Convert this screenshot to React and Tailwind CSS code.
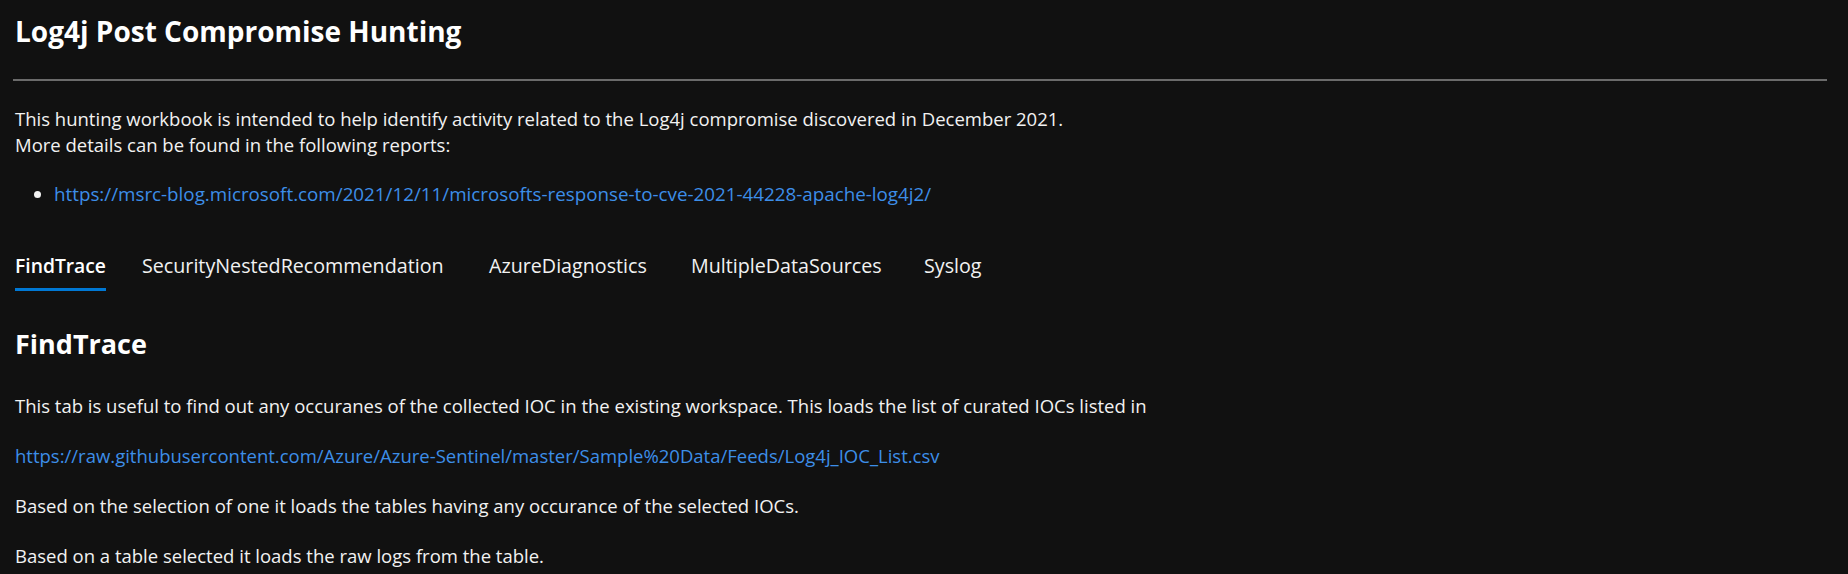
export default function App() {
  const font = { fontFamily: '"Open Sans", "Noto Sans", Arial, sans-serif' };
  const tabs = [
    { label: 'FindTrace', w: 'w-[127px]', active: true },
    { label: 'SecurityNestedRecommendation', w: 'w-[347px]' },
    { label: 'AzureDiagnostics', w: 'w-[202px]' },
    { label: 'MultipleDataSources', w: 'w-[233px]' },
    { label: 'Syslog', w: '' },
  ];
  return (
    <div className="min-h-[574px] w-full bg-[#111111] pl-[15px] pr-[21px] pt-[13px] text-[#f2f2f2]" style={font}>
      <h1 className="text-[28px] font-bold leading-[36px] text-white">Log4j Post Compromise Hunting</h1>
      <div className="-ml-[2px] mt-[30px] h-[2px] bg-[#6b6b6b]" />
      <div className="mt-[25px] text-[18.5px] leading-[26px]">
        <p>This hunting workbook is intended to help identify activity related to the Log4j compromise discovered in December 2021.</p>
        <p>More details can be found in the following reports:</p>
        <ul className="mt-[23px] list-disc pl-[39px] marker:text-[#f2f2f2]">
          <li>
            <a className="text-[18.8px] text-[#3d8ee8]" href="#">https://msrc-blog.microsoft.com/2021/12/11/microsofts-response-to-cve-2021-44228-apache-log4j2/</a>
          </li>
        </ul>
      </div>
      <div className="mt-[46px] flex text-[19.7px] leading-[26px]">
        {tabs.map((t) => (
          <div key={t.label} className={`flex ${t.w}`}>
            <div className="flex flex-col">
              <span className={t.active ? 'font-semibold text-[19.3px] text-white' : 'text-[#f2f2f2]'}>{t.label}</span>
              <div className={t.active ? 'mt-[9px] h-[3px] w-full bg-[#0078d4]' : 'mt-[9px] h-[3px]'} />
            </div>
          </div>
        ))}
      </div>
      <h2 className="mt-[37px] text-[27px] font-bold leading-[32px] text-white">FindTrace</h2>
      <div className="mt-[33px] flex flex-col gap-[24px] text-[18.5px] leading-[26px]">
        <p>This tab is useful to find out any occuranes of the collected IOC in the existing workspace. This loads the list of curated IOCs listed in</p>
        <p>
          <a className="text-[#3d8ee8]" href="#">https://raw.githubusercontent.com/Azure/Azure-Sentinel/master/Sample%20Data/Feeds/Log4j_IOC_List.csv</a>
        </p>
        <p>Based on the selection of one it loads the tables having any occurance of the selected IOCs.</p>
        <p>Based on a table selected it loads the raw logs from the table.</p>
      </div>
    </div>
  );
}
